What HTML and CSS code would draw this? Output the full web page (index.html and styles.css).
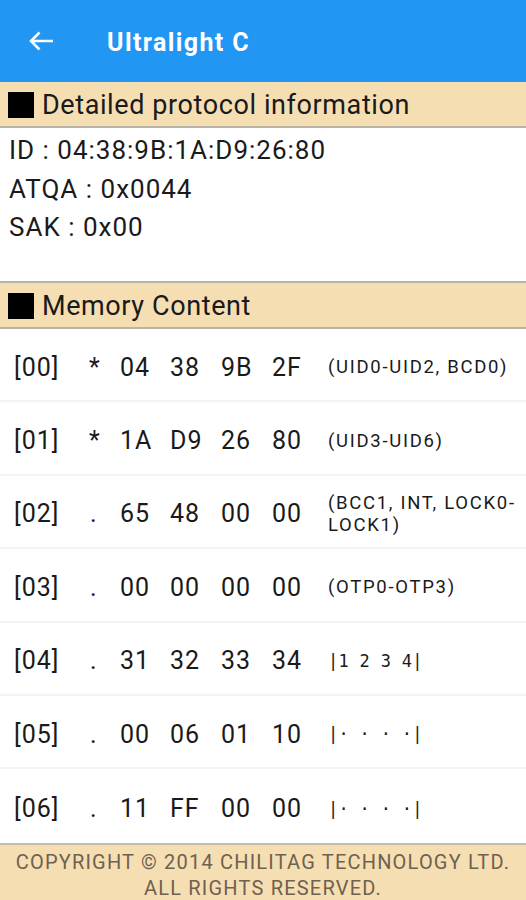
FILE: index.html
```html
<!DOCTYPE html>
<html>
<head>
<meta charset="utf-8">
<link rel="stylesheet" href="styles.css">
</head>
<body>
<div class="app">
  <header class="toolbar">
    <svg class="back" width="26" height="20" viewBox="0 0 26 20"><path d="M25 10H3M11.5 1.5L3 10l8.5 8.5" fill="none" stroke="#fff" stroke-width="2.6"/></svg>
    <div class="title">Ultralight C</div>
  </header>
  <div class="section-head first"><span class="sq"></span>Detailed protocol information</div>
  <div class="info">
    <div class="line">ID : 04:38:9B:1A:D9:26:80</div>
    <div class="line">ATQA : 0x0044</div>
    <div class="line">SAK : 0x00</div>
  </div>
  <div class="section-head second"><span class="sq"></span>Memory Content</div>
  <div class="rows">
    <div class="row"><span class="idx">[00]</span><span class="flag">*</span><span class="hx">04</span><span class="hx">38</span><span class="hx">9B</span><span class="hx">2F</span><span class="note">(UID0-UID2, BCD0)</span></div>
    <div class="row"><span class="idx">[01]</span><span class="flag">*</span><span class="hx">1A</span><span class="hx">D9</span><span class="hx">26</span><span class="hx">80</span><span class="note">(UID3-UID6)</span></div>
    <div class="row"><span class="idx">[02]</span><span class="flag dot">.</span><span class="hx">65</span><span class="hx">48</span><span class="hx">00</span><span class="hx">00</span><span class="note">(BCC1, INT, LOCK0-<br>LOCK1)</span></div>
    <div class="row"><span class="idx">[03]</span><span class="flag dot">.</span><span class="hx">00</span><span class="hx">00</span><span class="hx">00</span><span class="hx">00</span><span class="note">(OTP0-OTP3)</span></div>
    <div class="row"><span class="idx">[04]</span><span class="flag dot">.</span><span class="hx">31</span><span class="hx">32</span><span class="hx">33</span><span class="hx">34</span><span class="note mono">|1 2 3 4|</span></div>
    <div class="row"><span class="idx">[05]</span><span class="flag dot">.</span><span class="hx">00</span><span class="hx">06</span><span class="hx">01</span><span class="hx">10</span><span class="note mono">|· · · ·|</span></div>
    <div class="row last"><span class="idx">[06]</span><span class="flag dot">.</span><span class="hx">11</span><span class="hx">FF</span><span class="hx">00</span><span class="hx">00</span><span class="note mono">|· · · ·|</span></div>
  </div>
  <footer class="footer">COPYRIGHT © 2014 CHILITAG TECHNOLOGY LTD.<br>ALL RIGHTS RESERVED.</footer>
</div>
</body>
</html>
```
FILE: styles.css
```css
* { box-sizing: border-box; }
html, body { margin: 0; padding: 0; background: #fff; }
body { font-family: Roboto, "Liberation Sans", sans-serif; color: #1a1a1a; }
.app { width: 526px; height: 900px; display: flex; flex-direction: column; overflow: hidden; }
.toolbar { height: 82px; background: #2196f3; display: flex; align-items: center; padding-left: 28px; padding-top: 5px; flex-shrink: 0; }
.back { width: 26px; height: 20px; margin-top: -6px; }
.title { color: #fff; font-size: 25px; font-weight: 700; letter-spacing: 1.4px; margin-left: 53px; padding-bottom: 2px; }
.section-head { background: #f6deb3; display: flex; align-items: center; font-size: 27px; letter-spacing: 0.6px; height: 46px; flex-shrink: 0; padding-left: 8px; padding-top: 2px; color: #1a1a1a; }
.section-head.first { border-bottom: 2px solid #b9b3a6; height: 46px; }
.section-head.second { border-top: 2px solid #b9b3a6; border-bottom: 2px solid #b9b3a6; height: 48px; }
.sq { display: inline-block; width: 26px; height: 26px; background: #000; margin-right: 8px; }
.info { height: 153px; padding: 3px 0 0 9px; font-size: 26px; letter-spacing: 1px; }
.line { height: 38.5px; line-height: 38.5px; }
.rows { display: flex; flex-direction: column; flex: 1; }
.row { height: 73.4px; display: grid; grid-template-columns: 74px 32px 50px 51px 51px 56px 1fr; align-items: center; padding-left: 14px; padding-top: 5px; border-bottom: 2px solid #f4f4f4; font-size: 25px; letter-spacing: 1px; }
.row.last { border-bottom: none; }
.flag { padding-left: 1px; }
.flag.dot { padding-left: 2px; }
.note { font-size: 18.5px; letter-spacing: 1.7px; line-height: 22px; color: #1a1a1a; }
.note.mono { font-family: "DejaVu Sans Mono", monospace; font-size: 17px; letter-spacing: 0.3px; }
.footer { height: 57px; flex-shrink: 0; background: #f6deb3; border-top: 2px solid #c6bda9; color: #6e6150; text-align: center; font-size: 20px; letter-spacing: 1.2px; line-height: 26px; padding-top: 4px; white-space: nowrap; }
```
